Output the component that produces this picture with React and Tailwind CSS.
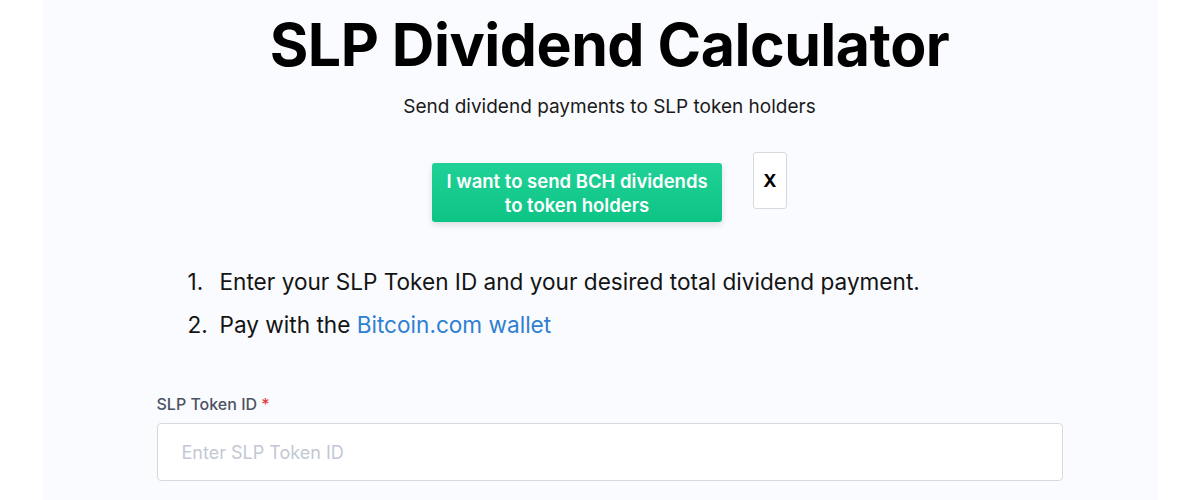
export default function App() {
  return (
    <div className="min-h-[500px] bg-white" style={{ fontFamily: "Inter, 'Noto Sans', sans-serif" }}>
      <div className="mx-auto w-[1115px] min-h-[500px] bg-[#fafbfe] pl-[114px] pr-[95px] pt-[9px]">
        <h1 className="text-center text-[59px] font-bold leading-[72px] text-black tracking-[-0.5px]">
          SLP Dividend Calculator
        </h1>
        <p className="mt-[14px] text-center text-[19px] leading-[24px] text-[#1a1a1a]">
          Send dividend payments to SLP token holders
        </p>
        <div className="mt-[33px] flex items-start justify-center gap-[31px]">
          <button className="mt-[11px] h-[59px] w-[290px] rounded-[3px] bg-gradient-to-b from-[#1fd196] to-[#0cc486] text-[18.5px] font-semibold leading-[24px] text-white shadow-[0_3px_6px_rgba(0,0,0,0.12)]">
            I want to send BCH dividends
            <br />
            to token holders
          </button>
          <button className="h-[57px] w-[34px] rounded-[3px] border border-[#d6d9de] bg-white text-[18px] font-bold text-black">
            X
          </button>
        </div>
        <ol className="mt-[45px] flex flex-col gap-[13px] text-[22.6px] leading-[30px] text-[#141414]">
          <li className="flex pl-[31px]">
            <span className="w-[32px]">1.</span>
            <span>Enter your SLP Token ID and your desired total dividend payment.</span>
          </li>
          <li className="flex pl-[31px]">
            <span className="w-[32px]">2.</span>
            <span>
              Pay with the <a className="text-[#2f80d1]">Bitcoin.com wallet</a>
            </span>
          </li>
        </ol>
        <label className="mt-[52px] block text-[16px] font-medium leading-[24px] text-[#4b5261]">
          SLP Token ID <span className="text-[#e53e3e]">*</span>
        </label>
        <input
          className="mt-[7px] block h-[58px] w-full rounded-[4px] border border-[#d9d9d9] bg-white px-[24px] text-[18px] text-[#333] outline-none placeholder:text-[#c3c8d4]"
          placeholder="Enter SLP Token ID"
        />
      </div>
    </div>
  );
}
